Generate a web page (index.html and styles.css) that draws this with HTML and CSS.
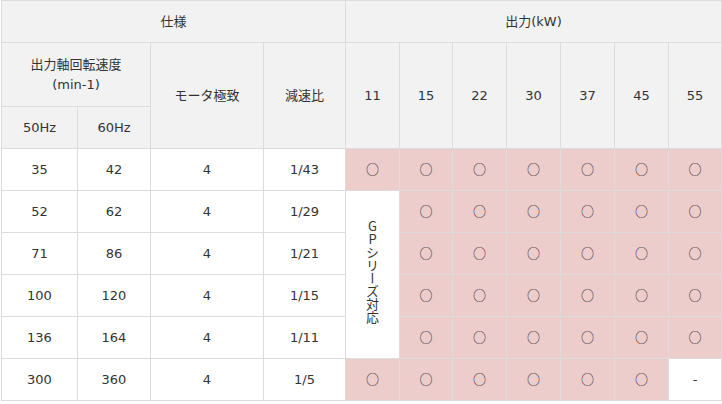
FILE: index.html
```html
<!DOCTYPE html>
<html lang="ja">
<head>
<meta charset="utf-8">
<title>仕様</title>
<link rel="stylesheet" href="styles.css">
</head>
<body>
<table class="spec">
  <colgroup>
    <col class="c-hz50"><col class="c-hz60"><col class="c-pole"><col class="c-ratio">
    <col class="c-kw"><col class="c-kw2"><col class="c-kw"><col class="c-kw"><col class="c-kw"><col class="c-kw"><col class="c-kw2">
  </colgroup>
  <thead>
    <tr class="h1">
      <th colspan="4">仕様</th>
      <th colspan="7">出力(kW)</th>
    </tr>
    <tr class="h2">
      <th colspan="2">出力軸回転速度<br>(min-1)</th>
      <th rowspan="2">モータ極致</th>
      <th rowspan="2">減速比</th>
      <th rowspan="2">11</th>
      <th rowspan="2">15</th>
      <th rowspan="2">22</th>
      <th rowspan="2">30</th>
      <th rowspan="2">37</th>
      <th rowspan="2">45</th>
      <th rowspan="2">55</th>
    </tr>
    <tr class="h3">
      <th>50Hz</th>
      <th>60Hz</th>
    </tr>
  </thead>
  <tbody>
    <tr>
      <td>35</td><td>42</td><td>4</td><td>1/43</td>
      <td class="ok"><span class="mark">○</span></td>
      <td class="ok"><span class="mark">○</span></td>
      <td class="ok"><span class="mark">○</span></td>
      <td class="ok"><span class="mark">○</span></td>
      <td class="ok"><span class="mark">○</span></td>
      <td class="ok"><span class="mark">○</span></td>
      <td class="ok"><span class="mark">○</span></td>
    </tr>
    <tr>
      <td>52</td><td>62</td><td>4</td><td>1/29</td>
      <td rowspan="4" class="gp"><span class="vert">GPシリーズ対応</span></td>
      <td class="ok"><span class="mark">○</span></td>
      <td class="ok"><span class="mark">○</span></td>
      <td class="ok"><span class="mark">○</span></td>
      <td class="ok"><span class="mark">○</span></td>
      <td class="ok"><span class="mark">○</span></td>
      <td class="ok"><span class="mark">○</span></td>
    </tr>
    <tr>
      <td>71</td><td>86</td><td>4</td><td>1/21</td>
      <td class="ok"><span class="mark">○</span></td>
      <td class="ok"><span class="mark">○</span></td>
      <td class="ok"><span class="mark">○</span></td>
      <td class="ok"><span class="mark">○</span></td>
      <td class="ok"><span class="mark">○</span></td>
      <td class="ok"><span class="mark">○</span></td>
    </tr>
    <tr>
      <td>100</td><td>120</td><td>4</td><td>1/15</td>
      <td class="ok"><span class="mark">○</span></td>
      <td class="ok"><span class="mark">○</span></td>
      <td class="ok"><span class="mark">○</span></td>
      <td class="ok"><span class="mark">○</span></td>
      <td class="ok"><span class="mark">○</span></td>
      <td class="ok"><span class="mark">○</span></td>
    </tr>
    <tr>
      <td>136</td><td>164</td><td>4</td><td>1/11</td>
      <td class="ok"><span class="mark">○</span></td>
      <td class="ok"><span class="mark">○</span></td>
      <td class="ok"><span class="mark">○</span></td>
      <td class="ok"><span class="mark">○</span></td>
      <td class="ok"><span class="mark">○</span></td>
      <td class="ok"><span class="mark">○</span></td>
    </tr>
    <tr>
      <td>300</td><td>360</td><td>4</td><td>1/5</td>
      <td class="ok"><span class="mark">○</span></td>
      <td class="ok"><span class="mark">○</span></td>
      <td class="ok"><span class="mark">○</span></td>
      <td class="ok"><span class="mark">○</span></td>
      <td class="ok"><span class="mark">○</span></td>
      <td class="ok"><span class="mark">○</span></td>
      <td>-</td>
    </tr>
  </tbody>
</table>
</body>
</html>
```
FILE: styles.css
```css
html, body {
  margin: 0;
  padding: 0;
  background: #ffffff;
}

body {
  font-family: "DejaVu Sans", "Noto Sans CJK JP", sans-serif;
  font-size: 13px;
  color: #333333;
}

.spec {
  border-collapse: collapse;
  table-layout: fixed;
  width: 720px;
  margin: 0 0 0 1px;
}

.c-hz50 { width: 76px; }
.c-hz60 { width: 73px; }
.c-pole { width: 113px; }
.c-ratio { width: 82px; }
.c-kw { width: 54px; }
.c-kw2 { width: 53px; }

.spec th,
.spec td {
  border: 1px solid #dcdcdc;
  text-align: center;
  vertical-align: middle;
  padding: 0;
  line-height: 20px;
  font-weight: normal;
}

.spec th {
  background: #f2f2f2;
}

.h1 { height: 42px; }
.h2 { height: 64px; }
.h3 { height: 42px; }
.spec tbody tr { height: 42px; }

.spec td.ok {
  background: #edcccc;
}

.mark {
  font-family: "Noto Sans CJK JP", sans-serif;
  font-size: 13px;
  color: #2a2a2a;
}

.gp {
  background: #ffffff;
}

.vert {
  display: inline-block;
  writing-mode: vertical-rl;
  text-orientation: upright;
  font-family: "Noto Sans CJK JP", sans-serif;
  line-height: 13px;
  letter-spacing: 0;
}
```
